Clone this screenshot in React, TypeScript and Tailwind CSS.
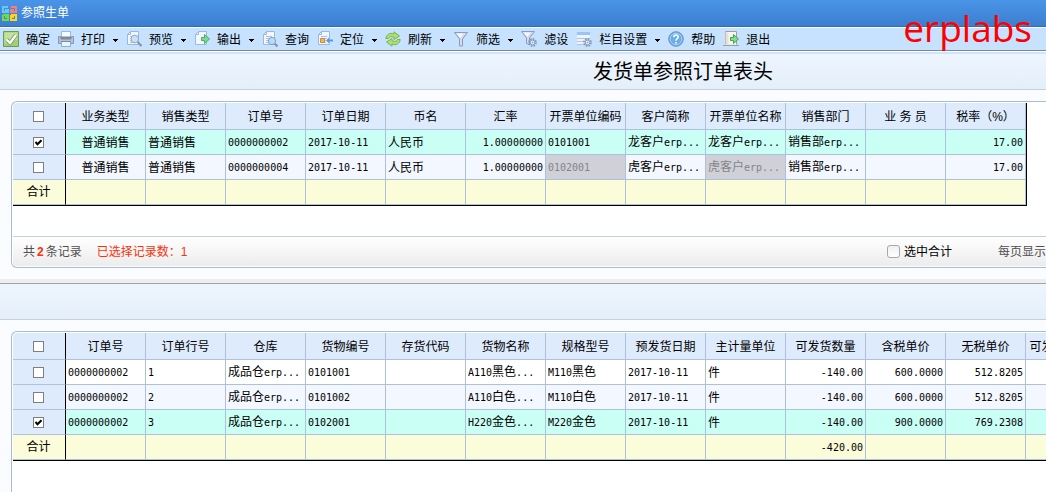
import type { ReactNode } from 'react'
import clsx from 'clsx'

type Column = { label: string; align?: 'left' | 'center' | 'right' }
type Row = { cells: string[]; checked?: boolean; disabled?: number[] }

const Doc = () => (
  <>
    <path d="M4.5 .5h8v13h-11v-10z" fill="#f1f7fd" stroke="#9bb9d8" />
    <path d="M4.5 .5v3h-3" fill="none" stroke="#9bb9d8" />
    <path d="M4 5.5h6M4 7.5h6M4 9.5h5M4 11.5h5" stroke="#a9c4e0" />
  </>
)

const Gear = ({ x, y }: { x: number; y: number }) => (
  <g fill="none" stroke="#8298ba">
    <circle cx={x} cy={y} r="3.6" strokeWidth="1.6" strokeDasharray="1.7 1.1" />
    <circle cx={x} cy={y} r="2.4" fill="#e3edf8" />
    <circle cx={x} cy={y} r=".8" fill="#8298ba" stroke="none" />
  </g>
)

const icons: Record<string, ReactNode> = {
  confirm: (
    <>
      <path d="M.5 .5h15v15H.5z" fill="#a3cf72" stroke="#6d9b5b" />
      <path d="M1.5 1.5h13v7l-13 4z" fill="#c4e29c" />
      <path d="M3.5 8.5l3.5 3.5 6-8" fill="none" stroke="#6f9e55" strokeWidth="4" />
      <path d="M3.5 8.5l3.5 3.5 6-8" fill="none" stroke="#fff" strokeWidth="2.4" />
    </>
  ),
  print: (
    <>
      <path d="M3.5 .5h9v6h-9z" fill="#f5faff" stroke="#9db8d5" />
      <path d="M.5 5.5h2v2h11v-2h2v7H.5z" fill="#b5c2d2" stroke="#8798ae" />
      <path d="M3 5.5h10v3H3z" fill="#7d8a9e" />
      <path d="M3.5 10.5h9v5h-9z" fill="#e8f3ff" stroke="#8fadcf" />
      <path d="M3 10.5h10" stroke="#7f8da1" />
    </>
  ),
  preview: (
    <>
      <Doc />
      <path d="M11.5 11l4 4" stroke="#8a8f9d" strokeWidth="2" />
      <circle cx="8.8" cy="8" r="3.8" fill="#c9e2f8" stroke="#91a9c6" />
    </>
  ),
  export: (
    <>
      <Doc />
      <path d="M3 4h8v8H3z" fill="#f1f7fd" />
      <path d="M7.5 6.5h3v-3l5 4.5-5 4.5v-3h-3z" fill="#7fd695" stroke="#49ad68" />
    </>
  ),
  query: (
    <>
      <Doc />
      <path d="M12.5 12.5l3 3" stroke="#8a8f9d" strokeWidth="2" />
      <circle cx="10" cy="10" r="3.6" fill="#b7dbf8" stroke="#7f9fc6" />
    </>
  ),
  locate: (
    <>
      <Doc />
      <path d="M3.5 7.5h4v4h-4z" fill="#f3b562" stroke="#c98c3f" />
      <path d="M9 9.5l3-3v2h4v2h-4v2z" fill="#5a9bdc" />
    </>
  ),
  refresh: (
    <g fill="#b0dc78" stroke="#7ab648">
      <path d="M.8 7.5C1.2 3.6 5 1.2 9 3V.8l5.5 4.2L9 8.5V6.3C6.5 5 4 5.5 3.5 7.5z" />
      <path d="M15.2 8.5C14.8 12.4 11 14.800 7 13v2.200L1.500 11 7 7.500v2.200c2.500 1.300 5 .8 5.500-1.200z" />
    </g>
  ),
  filter: (
    <>
      <path d="M1.500 1.500h13L9.500 8v7h-3V8z" fill="#d3dbec" stroke="#8d9abb" />
      <path d="M3.500 2.500h7L7.500 7z" fill="#f4f7fc" />
    </>
  ),
  filterSet: (
    <>
      <path d="M.5 .5h13L8.500 7v6.500l-3-1V7z" fill="#d3dbec" stroke="#8d9abb" />
      <path d="M2.500 1.500h7L6.500 6z" fill="#f4f7fc" />
      <Gear x={11.5} y={11.5} />
    </>
  ),
  columns: (
    <>
      <path d="M1 1h13v13H1z" fill="#edf4fc" />
      <path d="M1 1h13v3H1z" fill="#9bc4f4" />
      <path d="M1 7.500h13M1 10.500h13M1 13.500h9" stroke="#b1c6de" />
      <Gear x={11.5} y={11.5} />
    </>
  ),
  help: (
    <>
      <circle cx="8" cy="8" r="7.300" fill="#6cadE4" stroke="#6896c6" />
      <circle cx="8" cy="8" r="5.800" fill="none" stroke="#a4cff3" />
      <path d="M5.800 6.300c0-3 4.600-2.900 4.400-.2C10.100 7.700 8 7.600 8 9.800M8 11v1.700" fill="none" stroke="#fff" strokeWidth="1.500" />
    </>
  ),
  exit: (
    <>
      <path d="M2.500 13.500v-13h11v13" fill="#f8f5ee" stroke="#a59d93" />
      <path d="M5.500 2.500l-3-2v13.500l3-.5z" fill="#e7e0d3" />
      <path d="M0 14.500h16" stroke="#a59d93" />
      <path d="M7.500 6.500h3v-3l5 4.500-5 4.500v-3h-3z" fill="#83dc92" stroke="#3da55e" />
    </>
  ),
}

const toolbarItems = [
  { icon: 'confirm', label: '确定', menu: false },
  { icon: 'print', label: '打印', menu: true },
  { icon: 'preview', label: '预览', menu: true },
  { icon: 'export', label: '输出', menu: true },
  { icon: 'query', label: '查询', menu: false },
  { icon: 'locate', label: '定位', menu: true },
  { icon: 'refresh', label: '刷新', menu: true },
  { icon: 'filter', label: '筛选', menu: true },
  { icon: 'filterSet', label: '滤设', menu: false },
  { icon: 'columns', label: '栏目设置', menu: true },
  { icon: 'help', label: '帮助', menu: false },
  { icon: 'exit', label: '退出', menu: false },
]

const orderColumns: Column[] = [
  { label: '业务类型', align: 'center' },
  { label: '销售类型' },
  { label: '订单号' },
  { label: '订单日期' },
  { label: '币名' },
  { label: '汇率', align: 'right' },
  { label: '开票单位编码' },
  { label: '客户简称' },
  { label: '开票单位名称' },
  { label: '销售部门' },
  { label: '业 务 员' },
  { label: '税率（%）', align: 'right' },
]

const orderRows: Row[] = [
  {
    checked: true,
    cells: ['普通销售', '普通销售', '0000000002', '2017-10-11', '人民币', '1.00000000', '0101001', '龙客户erp...', '龙客户erp...', '销售部erp...', '', '17.00'],
  },
  {
    disabled: [6, 8],
    cells: ['普通销售', '普通销售', '0000000004', '2017-10-11', '人民币', '1.00000000', '0102001', '虎客户erp...', '虎客户erp...', '销售部erp...', '', '17.00'],
  },
]

const lineColumns: Column[] = [
  { label: '订单号' },
  { label: '订单行号' },
  { label: '仓库' },
  { label: '货物编号' },
  { label: '存货代码' },
  { label: '货物名称' },
  { label: '规格型号' },
  { label: '预发货日期' },
  { label: '主计量单位' },
  { label: '可发货数量', align: 'right' },
  { label: '含税单价', align: 'right' },
  { label: '无税单价', align: 'right' },
  { label: '可发货总金额', align: 'right' },
]

const lineRows: Row[] = [
  { cells: ['0000000002', '1', '成品仓erp...', '0101001', '', 'A110黑色...', 'M110黑色', '2017-10-11', '件', '-140.00', '600.0000', '512.8205', ''] },
  { cells: ['0000000002', '2', '成品仓erp...', '0101002', '', 'A110白色...', 'M110白色', '2017-10-11', '件', '-140.00', '600.0000', '512.8205', ''] },
  { checked: true, cells: ['0000000002', '3', '成品仓erp...', '0102001', '', 'H220金色...', 'M220金色', '2017-10-11', '件', '-140.00', '900.0000', '769.2308', ''] },
]

function RowCheckbox({ label, checked }: { label: string; checked?: boolean }) {
  return (
    <label className="grid place-items-center">
      <input
        type="checkbox"
        aria-label={label}
        defaultChecked={checked}
        className="peer col-start-1 row-start-1 size-[11px] appearance-none border border-[#7f7f7f] bg-white"
      />
      <svg viewBox="0 0 11 11" className="pointer-events-none invisible col-start-1 row-start-1 size-[11px] peer-checked:visible">
        <path d="M2.500 5l2 2.200L8.500 3.200" fill="none" stroke="#000" strokeWidth="2" />
      </svg>
    </label>
  )
}

// Latin runs are set in a half-width face so they line up with the Chinese glyphs
function CellText({ text }: { text: string }) {
  return (
    <>
      {text.split(/([A-Za-z0-9.-]+)/).map((part, i) =>
        i % 2 ? (
          <span key={i} className="font-['DejaVu_Sans_Mono','Noto_Sans_CJK_SC',monospace] text-[10px]">
            {part}
          </span>
        ) : (
          part
        )
      )}
    </>
  )
}

function DataGrid({ name, columns, rows, totals = {}, closed }: {
  name: string
  columns: Column[]
  rows: Row[]
  totals?: Record<number, string>
  closed?: boolean
}) {
  const alignClass = (col: Column) =>
    col.align === 'right' ? 'text-right' : col.align === 'center' ? 'text-center' : 'text-left'
  const cell = 'overflow-hidden whitespace-nowrap border-r border-b border-[#aec0db] px-[2px] pt-px pb-0'
  const rowHead = 'border-r border-b border-r-black border-b-[#aec0db] py-0 pr-px pl-0 font-normal'

  return (
    <table
      aria-label={name}
      className={clsx('w-0 table-fixed border-separate border-spacing-0 border-b border-black', closed && 'border-r')}
    >
      <colgroup>
        <col className="w-[53px]" />
        {columns.map((col, i) => <col key={i} className="w-20" />)}
      </colgroup>
      <thead>
        <tr className="h-[27px] bg-[#deebfd]">
          <th className={rowHead}><RowCheckbox label={`${name}全选`} /></th>
          {columns.map((col, i) => (
            <th key={i} className={clsx(cell, 'font-normal')}>{col.label}</th>
          ))}
        </tr>
      </thead>
      <tbody>
        {rows.map((row, r) => (
          <tr key={r} className={clsx('h-[25px]', row.checked ? 'bg-[#c9fff5]' : r % 2 ? 'bg-[#f3f7ff]' : 'bg-white')}>
            <th className={clsx(rowHead, 'bg-[#deebfd]')}>
              <RowCheckbox label={`${name}第${r + 1}行`} checked={row.checked} />
            </th>
            {row.cells.map((text, i) => (
              <td key={i} className={clsx(cell, alignClass(columns[i]), row.disabled?.includes(i) && 'bg-[#cfd0d8] text-[#858585]')}>
                <CellText text={text} />
              </td>
            ))}
          </tr>
        ))}
        <tr className="h-[25px] bg-[#fbfcd9]">
          <th className={rowHead}>合计</th>
          {columns.map((col, i) => (
            <td key={i} className={clsx(cell, alignClass(col))}>
              <CellText text={totals[i] ?? ''} />
            </td>
          ))}
        </tr>
      </tbody>
    </table>
  )
}

export default function App() {
  return (
    <div className="flex h-screen flex-col overflow-hidden bg-[#fbfcff] font-['Liberation_Sans','Noto_Sans_CJK_SC',sans-serif] text-[12px] leading-[16px] text-black">
      <header className="relative shrink-0">
        <div className="flex h-[27px] items-center gap-1 border-b border-[#2e6db8] bg-linear-to-b from-[#4a94e8] to-[#3c7ed0] pl-[2px] text-white">
          <svg viewBox="0 0 15 15" className="size-[15px]" fill="none" strokeWidth="2">
            <path d="M6 1H1v5h5V3M3 4h3" stroke="#65c9f4" />
            <path d="M9 1h5v5H9V3M9 4h3" stroke="#f58078" />
            <path d="M1 9h5v5H1V9M4 9v3" stroke="#75dc3d" />
            <path d="M9 9h5v5H9V9M11 9v3" stroke="#ffd51f" />
          </svg>
          <h1>参照生单</h1>
        </div>
        <nav className="flex h-6 items-center border-t border-b border-t-white border-b-[#7d8794] bg-[#c6e2ff] pl-[3px]">
          {toolbarItems.map((item) => (
            <button key={item.label} className="mr-2 flex shrink-0 items-center">
              <svg viewBox="0 0 16 16" className="mr-[7px] size-4">{icons[item.icon]}</svg>
              <span className="pt-[2px]">{item.label}</span>
              {item.menu && (
                <svg viewBox="0 0 5 3" className="mt-[2px] ml-2 h-[3px] w-[5px]">
                  <path d="M0 0h5v1H4v1H3v1H2V2H1V1H0z" />
                </svg>
              )}
            </button>
          ))}
        </nav>
        <div className="h-[3px] border-t border-white bg-[#cfe5ff]" />
        <span className="pointer-events-none absolute top-[3px] right-[14px] font-['Open_Sans',sans-serif] text-[37px] leading-[50px] font-medium text-[#f00]">
          erplabs
        </span>
      </header>

      <div className="flex h-9 shrink-0 items-center justify-center border-b border-[#c5cfde] bg-linear-to-b from-[#eef5fe] to-[#e4effb] pl-80">
        <h2 className="text-[20px] leading-[28px]">发货单参照订单表头</h2>
      </div>

      <section className="mt-[11px] ml-[11px] shrink-0 rounded-l-md border border-r-0 border-[#a5bdd6] bg-white p-px pr-0">
        <div className="overflow-hidden rounded-tl-sm pb-[30px]">
          <DataGrid name="订单表头" columns={orderColumns} rows={orderRows} closed />
        </div>
        <footer className="flex h-[30px] items-center border-t border-[#c6cfd8] bg-linear-to-b from-white to-[#ececec] pl-[10px] text-[#505050]">
          <span>
            共<b className="px-[2px] text-[#f8330c]">2</b>条记录
          </span>
          <span className="ml-[15px] text-[#f8330c]">已选择记录数：1</span>
          <label className="ml-auto flex items-center gap-1 text-black">
            <input type="checkbox" className="size-[13px] appearance-none rounded-[3px] border border-[#a8a8a8] bg-linear-to-b from-[#f0f0f0] to-white" />
            选中合计
          </label>
          <span className="ml-[46px] shrink-0">每页显示</span>
        </footer>
      </section>

      <div className="mt-[11px] h-[5px] shrink-0 border-b border-[#a3a3a3] bg-[#eeeeef]" />
      <div className="h-9 shrink-0 border-b border-[#c5cfde] bg-linear-to-b from-[#eef5fe] to-[#e4effb]" />

      <section className="mt-[11px] ml-[11px] min-h-0 flex-1 rounded-tl-md border-t border-l border-[#a5bdd6] bg-white pt-px pl-px">
        <div className="overflow-hidden rounded-tl-sm">
          <DataGrid name="订单表体" columns={lineColumns} rows={lineRows} totals={{ 9: '-420.00' }} />
        </div>
      </section>
    </div>
  )
}
